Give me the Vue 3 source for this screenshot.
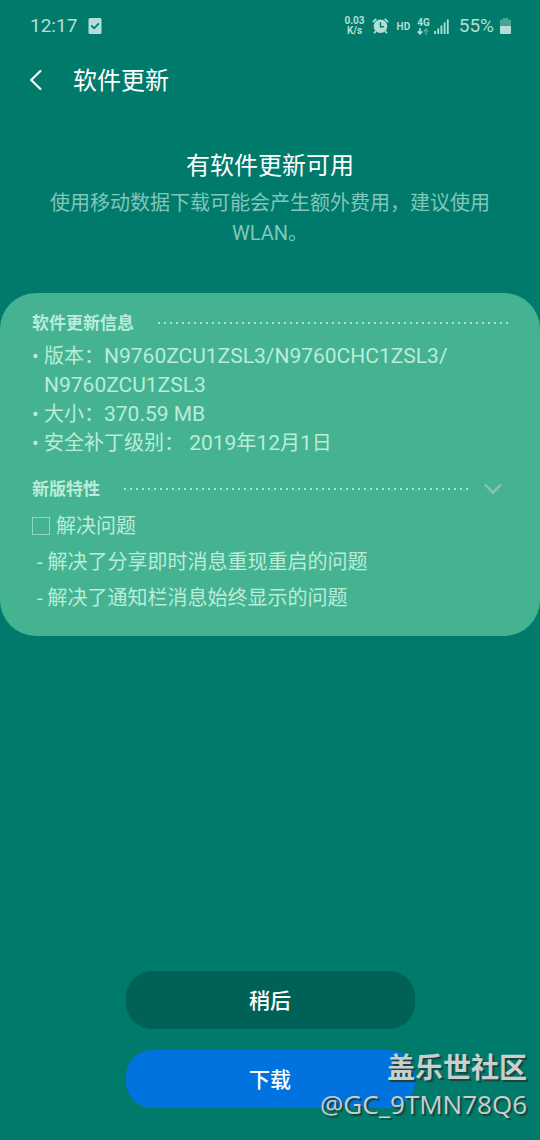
<script setup>
import { ref } from 'vue'

const time = '12:17'
const battery = '55%'
const expanded = ref(true)
// "|" marks a place where a long value may wrap.
const details = [
  '版本：N9760ZCU1ZSL3/N9760CHC1ZSL3/|N9760ZCU1ZSL3',
  '大小：370.59 MB',
  '安全补丁级别： 2019年12月1日',
]
const fixes = ['- 解决了分享即时消息重现重启的问题', '- 解决了通知栏消息始终显示的问题']

// Latin runs are set one size larger than the Chinese text around them.
const runs = (text) =>
  text.split(/([\x20-\x7b]+)|(\|)/).filter(Boolean).map((t) => ({ t, latin: /^[\x20-\x7b]/.test(t) }))
</script>

<template>
  <div class="screen">
    <div class="status">
      <span class="time">{{ time }}</span>
      <svg class="task" width="14" height="16" viewBox="0 0 14 16" aria-hidden="true">
        <rect x="0.5" width="13" height="16" rx="1.5" fill="currentColor" />
        <path d="M3.2 7.4l2.9 2.9 4.7-4.9" fill="none" stroke="#007b6b" stroke-width="1.8" />
      </svg>
      <span class="spacer"></span>
      <span class="speed"><span>0.03</span><span>K/s</span></span>
      <svg class="alarm" width="17" height="16" viewBox="0 0 17 16" aria-hidden="true">
        <circle cx="8.5" cy="8.2" r="6.8" fill="currentColor" />
        <path d="M0.8 4.2L4.3 0.9M16.2 4.2L12.7 0.9M3.8 13l-1.6 2.3M13.2 13l1.6 2.3" stroke="currentColor" stroke-width="1.8" />
        <path d="M8.5 4.2v4.5h3.4" fill="none" stroke="#007b6b" stroke-width="1.4" />
      </svg>
      <span class="hd">HD</span>
      <span class="network">
        <span>4G</span>
        <svg width="12" height="7" viewBox="0 0 12 7" aria-hidden="true">
          <path d="M3 0v5.5M0.7 3.4L3 5.9l2.3-2.5" fill="none" stroke="currentColor" stroke-width="1.6" />
          <path d="M9 7V1.2M6.8 3.5L9 1.1l2.2 2.4" fill="none" stroke="currentColor" stroke-width="1.4" opacity="0.45" />
        </svg>
      </span>
      <svg class="signal" width="15" height="15" viewBox="0 0 15 15" aria-hidden="true">
        <path d="M1 15v-3M4.2 15V9.5M7.4 15V6.5M10.6 15V3.5M13.8 15V0.5" stroke="currentColor" stroke-width="1.8" />
      </svg>
      <span class="percent">{{ battery }}</span>
      <svg class="battery" width="11" height="16" viewBox="0 0 11 16" aria-hidden="true">
        <path d="M3 0h5v1.6h2a1 1 0 0 1 1 1V8H0V2.6a1 1 0 0 1 1-1h2z" fill="currentColor" opacity="0.4" />
        <path d="M0 8h11v7a1 1 0 0 1-1 1H1a1 1 0 0 1-1-1z" fill="currentColor" />
      </svg>
    </div>

    <header class="bar">
      <button class="back" type="button" aria-label="返回">
        <svg width="14" height="22" viewBox="0 0 14 22" aria-hidden="true">
          <path d="M12 1.5L2.2 11l9.8 9.5" fill="none" stroke="currentColor" stroke-width="2.2" />
        </svg>
      </button>
      <h1>软件更新</h1>
    </header>

    <main>
      <section class="intro">
        <h2>有软件更新可用</h2>
        <p>使用移动数据下载可能会产生额外费用，建议使用 WLAN。</p>
      </section>

      <section class="card">
        <div class="heading">
          <h3>软件更新信息</h3>
          <span class="dots"></span>
        </div>
        <ul class="details">
          <li v-for="item in details" :key="item">
            <span class="bullet">•</span>
            <span><template v-for="(run, i) in runs(item)" :key="i"><wbr v-if="run.t === '|'"><span v-else :class="{ latin: run.latin }">{{ run.t }}</span></template></span>
          </li>
        </ul>
        <div class="heading features">
          <h3>新版特性</h3>
          <span class="dots"></span>
          <button class="toggle" type="button" aria-label="新版特性" :aria-expanded="expanded" @click="expanded = !expanded">
            <svg width="18" height="12" viewBox="0 0 18 12" aria-hidden="true">
              <path d="M1 1.5l8 8.2 8-8.2" fill="none" stroke="currentColor" stroke-width="2.4" />
            </svg>
          </button>
        </div>
        <div v-if="expanded" class="notes">
          <p class="topic"><span class="box"></span>解决问题</p>
          <p v-for="fix in fixes" :key="fix" class="fix">{{ fix }}</p>
        </div>
      </section>
    </main>

    <footer class="actions">
      <button class="later" type="button">稍后</button>
      <button class="download" type="button">下载</button>
    </footer>

    <div class="watermark">
      <span class="site">盖乐世社区</span>
      <span class="user">@GC_9TMN78Q6</span>
    </div>
  </div>
</template>

<style>
body {
  margin: 0;
  background: #007b6b;
}
</style>

<style scoped>
.screen {
  position: relative;
  box-sizing: border-box;
  min-height: 100vh;
  display: flex;
  flex-direction: column;
  background: #007b6b;
  color: #fff;
  font-family: Roboto, "Noto Sans CJK SC", sans-serif;
  font-size: 20px;
}
h1, h2, h3, p, ul {
  margin: 0;
  padding: 0;
  font-weight: 400;
}
button {
  border: 0;
  padding: 0;
  background: none;
  color: inherit;
  font-family: inherit;
  cursor: pointer;
}
svg {
  display: block;
  flex: none;
}
.latin {
  font-size: 21px;
}
.status {
  display: flex;
  align-items: center;
  height: 52px;
  padding: 0 29px 0 30px;
  color: #b3dfd6;
}
.time,
.percent {
  font-size: 19px;
  line-height: 24px;
}
.task {
  margin-left: 11px;
}
.spacer {
  flex: 1;
}
.speed,
.network {
  display: flex;
  flex-direction: column;
  align-items: center;
  font-size: 10px;
  font-weight: 700;
  line-height: 10px;
}
.alarm {
  margin-left: 7px;
}
.hd {
  margin: 0 7px 0 8px;
  font-size: 10px;
  font-weight: 700;
}
.signal {
  margin: 0 10px 0 4px;
}
.battery {
  margin-left: 6px;
}
.bar {
  display: flex;
  align-items: center;
  height: 56px;
  padding: 0 29px;
}
.back {
  margin-right: 30px;
}
h1,
h2 {
  font-size: 24px;
  line-height: 34px;
}
h1 {
  padding-top: 2px;
}
.intro {
  padding: 41px 40px 45px;
  text-align: center;
}
.intro p {
  margin-top: 5px;
  line-height: 30px;
  color: #80c6bb;
}
.card {
  padding: 17px 32px 20px;
  border-radius: 36px;
  background: #45b392;
  color: #b9edd9;
}
.heading {
  display: flex;
  align-items: center;
  height: 26px;
}
h3 {
  font-size: 17px;
  font-weight: 700;
  line-height: 24px;
}
.dots {
  flex: 1;
  height: 2px;
  margin-left: 24px;
  background: repeating-linear-gradient(to right, #a5e6cd 0 2px, transparent 2px 6px);
}
.toggle {
  margin: 0 6px 0 14px;
  color: #8fc0ae;
}
.details {
  list-style: none;
  margin-top: 6px;
  line-height: 29px;
}
.details li {
  display: flex;
}
.bullet {
  flex: none;
  width: 12px;
}
.features {
  margin-top: 18px;
}
.notes {
  margin-top: 6px;
  line-height: 36px;
}
.topic {
  display: flex;
  align-items: center;
}
.box {
  box-sizing: border-box;
  width: 18px;
  height: 18px;
  margin-right: 6px;
  border: 1px solid #8cd8bc;
}
.fix {
  padding-left: 5px;
}
.actions {
  display: flex;
  flex-direction: column;
  align-items: center;
  gap: 21px;
  margin-top: auto;
  padding: 32px;
}
.actions button {
  width: 100%;
  max-width: 289px;
  height: 58px;
  padding-bottom: 2px;
  border-radius: 26px;
  font-size: 21px;
  font-weight: 500;
}
.later {
  background: #006256;
}
.download {
  background: #0073de;
}
.watermark {
  position: absolute;
  right: 13px;
  bottom: 18px;
  display: flex;
  flex-direction: column;
  align-items: flex-end;
  color: #c9cfcd;
  text-shadow: 2px 2px 1px #17443c;
  pointer-events: none;
}
.site {
  font-size: 28px;
  font-weight: 700;
  line-height: 34px;
}
.user {
  font-family: "Open Sans", sans-serif;
  font-size: 26px;
  line-height: 36px;
}
</style>
